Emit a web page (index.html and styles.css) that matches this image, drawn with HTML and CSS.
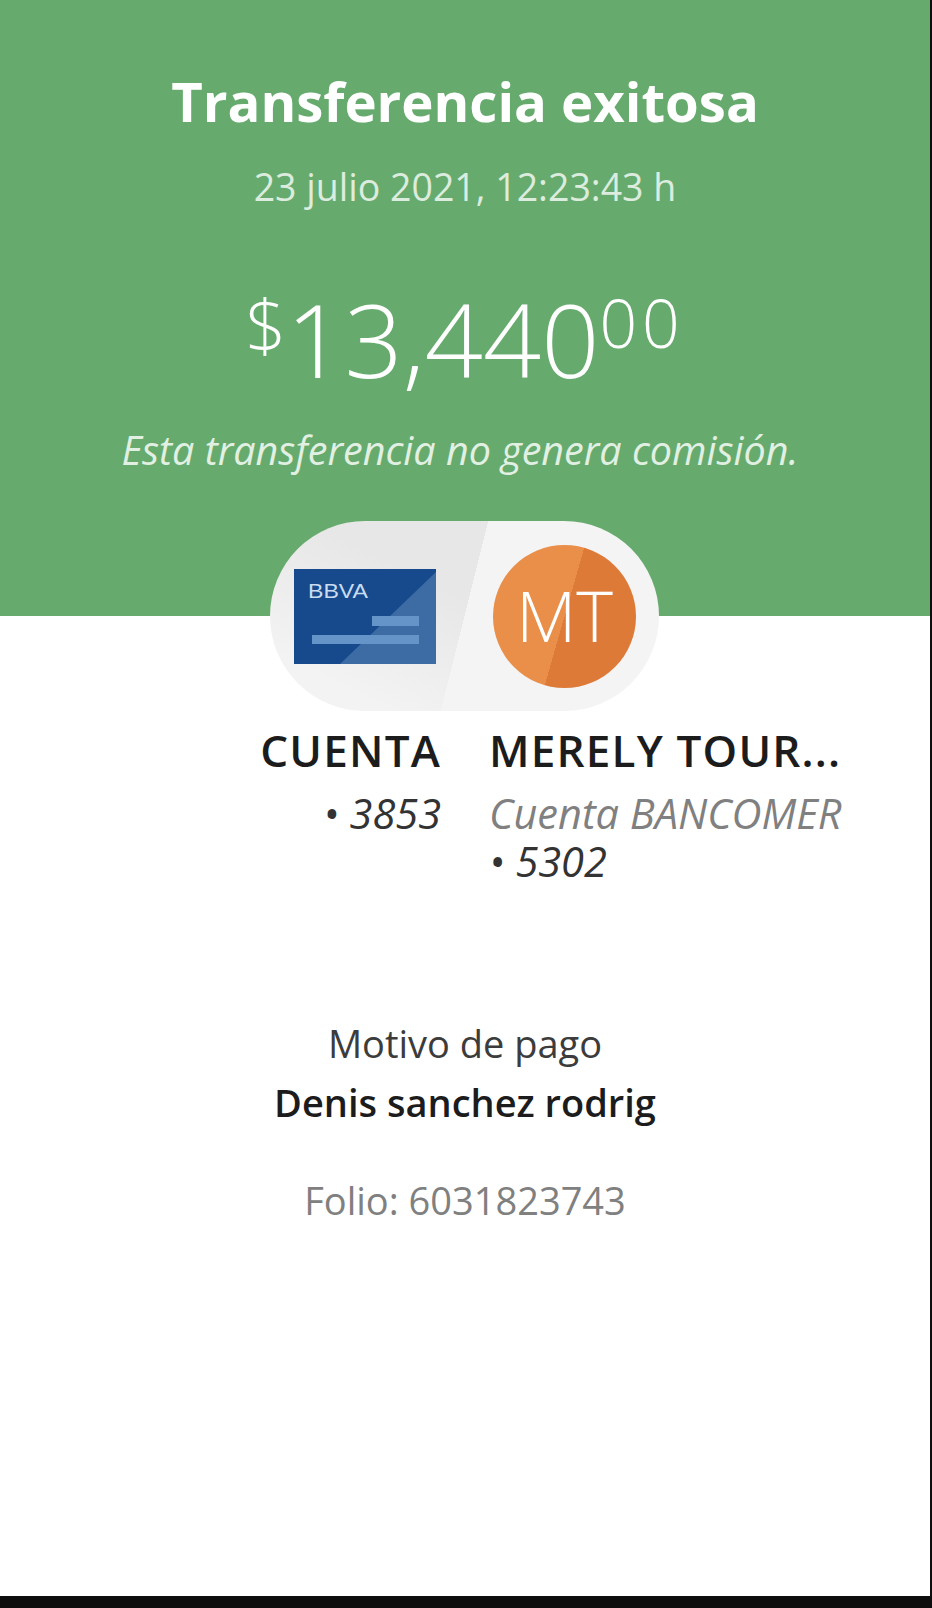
FILE: index.html
```html
<!DOCTYPE html>
<html>
<head>
    <meta charset="UTF-8">
    <title>Transferencia exitosa</title>
    <link rel="stylesheet" href="styles.css">
</head>
<body>
    <div class="screen">
        <div class="hero">
            <h1 class="hero-title">Transferencia exitosa</h1>
            <p class="hero-date">23 julio 2021, 12:23:43 h</p>
            <p class="amount"><span class="amount-sign">$</span>13,440<span class="amount-cents">00</span></p>
            <p class="hero-note">Esta transferencia no genera comisión.</p>
        </div>

        <div class="pill">
            <svg class="bank-card" width="142" height="95" viewBox="0 0 142 95">
                <rect width="142" height="95" fill="#174a8c"/>
                <polygon points="142,3 142,95 46,95" fill="#3d6ba4"/>
                <rect x="78" y="47" width="47" height="10" fill="#6595c8"/>
                <rect x="18" y="66" width="107" height="9" fill="#6595c8"/>
                <text x="14" y="29" class="bank-name" textLength="60" lengthAdjust="spacingAndGlyphs">BBVA</text>
            </svg>
            <div class="avatar">MT</div>
        </div>

        <div class="accounts">
            <div class="account account-from">
                <div class="account-name">CUENTA</div>
                <div class="account-number">• 3853</div>
            </div>
            <div class="account">
                <div class="account-name">MERELY TOUR...</div>
                <div class="account-bank">Cuenta BANCOMER</div>
                <div class="account-number">• 5302</div>
            </div>
        </div>

        <div class="details">
            <div class="details-label">Motivo de pago</div>
            <div class="details-value">Denis sanchez rodrig</div>
            <div class="details-folio">Folio: 6031823743</div>
        </div>
    </div>
</body>
</html>
```

FILE: styles.css
```css
body {
    margin: 0;
    padding: 0;
    background-color: #0e0e0e;
    font-family: "Open Sans", Arial, sans-serif;
}
.screen {
    width: 930px;
    height: 1596px;
    margin-bottom: 12px;
    background-color: #fff;
    overflow: hidden;
}
.hero {
    height: 616px;
    box-sizing: border-box;
    padding-top: 68px;
    background-color: #66ab6d;
    color: #fff;
    text-align: center;
}
.hero-title {
    margin: 0;
    font-size: 54.5px;
    line-height: 66px;
    font-weight: 700;
}
.hero-date {
    margin: 28px 0 0;
    font-size: 37.5px;
    line-height: 50px;
    font-weight: 400;
    color: #dcecde;
}
.amount {
    margin: 50px 0 0;
    font-size: 102px;
    line-height: 120px;
    font-weight: 300;
}
.amount-sign {
    font-size: 72px;
    vertical-align: 26px;
}
.amount-cents {
    font-size: 66px;
    letter-spacing: 5px;
    vertical-align: 30px;
}
.hero-note {
    margin: 26px 0 0;
    padding-right: 10px;
    font-size: 39.5px;
    line-height: 50px;
    font-weight: 400;
    font-style: italic;
    color: #e2f0e3;
}
.pill {
    display: flex;
    align-items: center;
    justify-content: space-between;
    box-sizing: border-box;
    width: 389px;
    height: 190px;
    margin: -95px 0 0 270px;
    padding: 0 23px 0 24px;
    border-radius: 95px;
    background: linear-gradient(104deg, transparent 50%, #f4f4f4 50%),
        linear-gradient(to bottom left, #e7e7e7 45%, #f3f3f3 85%);
}
.bank-card {
    display: block;
}
.bank-name {
    font-family: "Liberation Sans", Arial, sans-serif;
    font-size: 21px;
    fill: #c9dcf0;
}
.avatar {
    width: 143px;
    height: 143px;
    border-radius: 50%;
    background: linear-gradient(106deg, #e98f4a 50%, #dd7a38 50%);
    color: #fff;
    font-size: 70px;
    font-weight: 300;
    line-height: 141px;
    text-align: center;
}
.accounts {
    display: grid;
    grid-template-columns: 1fr 1fr;
    column-gap: 48px;
    margin-top: 11px;
}
.account-from {
    text-align: right;
}
.account-name {
    font-size: 44px;
    line-height: 56px;
    font-weight: 600;
    letter-spacing: 1.2px;
    color: #1c1c1c;
}
.account-number {
    margin-top: 11px;
    font-size: 41.5px;
    line-height: 48px;
    font-weight: 400;
    font-style: italic;
    color: #333;
}
.account-bank {
    margin-top: 11px;
    font-size: 41.5px;
    line-height: 48px;
    font-weight: 400;
    font-style: italic;
    color: #808080;
}
.account-bank + .account-number {
    margin-top: 0;
}
.details {
    margin-top: 134px;
    text-align: center;
}
.details-label {
    font-size: 38px;
    line-height: 48px;
    font-weight: 400;
    color: #3c3c3c;
}
.details-value {
    margin-top: 11px;
    font-size: 38px;
    line-height: 48px;
    font-weight: 600;
    color: #1c1c1c;
}
.details-folio {
    margin-top: 50px;
    font-size: 38px;
    line-height: 48px;
    font-weight: 400;
    color: #808080;
}
```
